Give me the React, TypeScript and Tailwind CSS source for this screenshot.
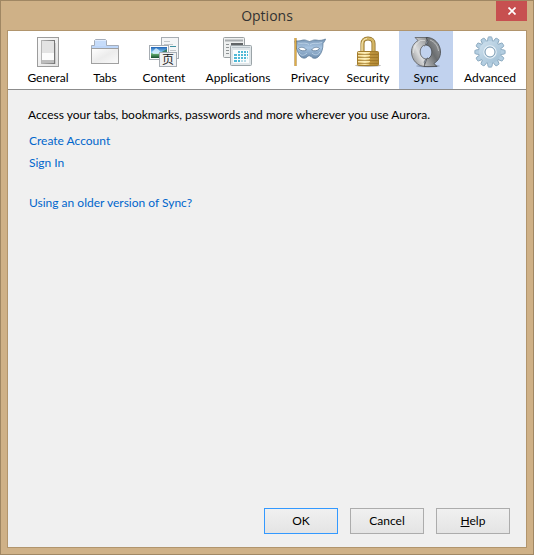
import React, { useState } from 'react';

const GeneralIcon = () => (
  <svg width="32" height="32" viewBox="0 0 32 32" fill="none">
    <defs>
      <linearGradient id="genPlate" x1="0" y1="0" x2="1" y2="1">
        <stop offset="0" stopColor="#fbfbfb" />
        <stop offset="1" stopColor="#e2e2e2" />
      </linearGradient>
      <linearGradient id="genShade" x1="0" y1="0" x2="1" y2="0">
        <stop offset="0" stopColor="#b5b5b5" />
        <stop offset="1" stopColor="#777" />
      </linearGradient>
    </defs>
    <rect x="5.5" y="1.5" width="21" height="29" fill="url(#genPlate)" stroke="#9c9c9c" />
    <path d="M11 7h13v21H11z" fill="#999" opacity=".35" />
    <rect x="9.5" y="4.5" width="13" height="23" fill="#e3e3e3" stroke="url(#genShade)" />
    <path d="M10 17h12v7H10z" fill="#fcfcfc" />
    <path d="M10 24h12v3H10z" fill="#bdbdbd" />
  </svg>
);

const TabsIcon = () => (
  <svg width="32" height="32" viewBox="0 0 32 32" fill="none">
    <defs>
      <linearGradient id="tabBody" x1="0" y1="0" x2="1" y2="1">
        <stop offset="0" stopColor="#fff" />
        <stop offset=".5" stopColor="#ececec" />
        <stop offset="1" stopColor="#fafafa" />
      </linearGradient>
      <linearGradient id="tabTop" x1="0" y1="0" x2="0" y2="1">
        <stop offset="0" stopColor="#e4efff" />
        <stop offset="1" stopColor="#b7d2f8" />
      </linearGradient>
    </defs>
    <path d="M2.500 12.500v-3h3v-5l1-1h10l1 1v5h12v3z" fill="url(#tabTop)" stroke="#a5adba" />
    <path d="M6 5h11v6H6z" fill="#c6dcfa" />
    <path d="M3 10h26v2H3z" fill="#bdd6f9" />
    <rect x="2.500" y="12.500" width="27" height="15" fill="url(#tabBody)" stroke="#a0a0a0" />
  </svg>
);

const ContentIcon = () => (
  <svg width="32" height="32" viewBox="0 0 32 32" fill="none">
    <defs>
      <linearGradient id="sky" x1="0" y1="0" x2="0" y2="1">
        <stop offset="0" stopColor="#1f63b6" />
        <stop offset=".5" stopColor="#8fd0f4" />
        <stop offset=".62" stopColor="#64b070" />
        <stop offset="1" stopColor="#164e30" />
      </linearGradient>
    </defs>
    <rect x="13.500" y="1.500" width="17" height="21" fill="#f4f5f6" stroke="#a7adb3" />
    <path d="M16 5.500h6M16 8.500h9M22 14.500h6" stroke="#c3c7ca" />
    <path d="M22 10.500h6" stroke="#3c8fa0" />
    <rect x="1.500" y="9.500" width="19" height="14" fill="#fff" stroke="#a7adb3" />
    <path d="M3 11h16v11H3z" fill="url(#sky)" />
    <path d="M4 16l4-4 3 2 2 3-3 1H5z" fill="#d9f1ff" opacity=".8" />
    <path d="M12 17l7-4v9h-8z" fill="#236a3c" opacity=".75" />
    <rect x="11.500" y="16.500" width="17" height="14" fill="#f1f2f3" stroke="#a7adb3" />
    <text x="20" y="28" textAnchor="middle" fontSize="12" fill="#222" className="font-['Noto_Sans_CJK_SC',sans-serif]">页</text>
  </svg>
);

const ApplicationsIcon = () => (
  <svg width="32" height="32" viewBox="0 0 32 32" fill="none">
    <rect x="1.500" y="1.500" width="21" height="20" rx="1" fill="#eef0f0" stroke="#9ba0a2" />
    <path d="M3 4.500h18" stroke="#a9adaf" strokeWidth="2" />
    <path d="M4 8.500h3M4 11.500h3M4 14.500h3M4 17.500h3" stroke="#8f9394" />
    <path d="M9 7h12v3H9z" fill="#616567" />
    <rect x="8.500" y="9.500" width="21" height="20" rx="1" fill="#dfe5e8" stroke="#9ba4a8" />
    <path d="M10 11.500h18" stroke="#bbc5ca" />
    <path d="M11 14h16v13H11z" fill="#fbfdfd" />
    <path
      d="M16 15h2v2h-2zM19 15h2v2h-2zM22 15h2v2h-2zM25 15h1v2h-1zM12 18h3v2h-3zM16 18h2v2h-2zM19 18h2v2h-2zM22 18h2v2h-2zM25 18h1v2h-1zM12 21h3v2h-3zM16 21h2v2h-2zM19 21h2v2h-2zM22 21h2v2h-2zM12 24h3v2h-3zM16 24h2v2h-2z"
      fill="#4fb9d6"
    />
    <path d="M19 24h2v2h-2zM22 24h2v2h-2zM25 21h1v2h-1z" fill="#b8dce7" />
  </svg>
);

const PrivacyIcon = () => (
  <svg width="32" height="32" viewBox="0 0 32 32" fill="none">
    <defs>
      <linearGradient id="maskFill" x1="0" y1="0" x2="0" y2="1">
        <stop offset="0" stopColor="#7896b5" />
        <stop offset=".45" stopColor="#a8c5e2" />
        <stop offset="1" stopColor="#6d8cac" />
      </linearGradient>
    </defs>
    <path
      d="M1 5c3 0 5 0 8-1 3-.5 4 1 6.500 1.500C18 5 19 3.500 22 4c4 1 7 0 9.500-1-.5 2-1.500 3-2.500 4.500 0 5-1 9-4 12.500-2.500 3-6 3-8 .5-1-1-2.500-1-3.500 0-2 2.500-5.500 2-7.500-.5C3.500 17 1.500 10 1 5z"
      fill="url(#maskFill)"
      stroke="#5f7d9b"
      strokeWidth=".8"
    />
    <path d="M4.500 12.500c2-2 6-1.500 8 1.500-3 1.500-6 1-8-1.500zM17.500 14c2-3 6-3.500 8-1.500-2 2.500-5 3-8 1.500z" fill="#fff" stroke="#5d7894" strokeWidth=".8" />
    <path d="M5 17c2 3 5 3 8 0M18 17c3 3 6 2 8-1M4 7c4 1 7-1 11 1.500M16 8.500c4-2.500 7 0 12-2" stroke="#d4e6f5" opacity=".6" />
    <path d="M1.500 2v28" stroke="#9c6b14" strokeWidth="2" />
    <path d="M1.500 2v28" stroke="#dfae45" />
  </svg>
);

const SecurityIcon = () => (
  <svg width="32" height="32" viewBox="0 0 32 32" fill="none">
    <defs>
      <linearGradient id="lockBody" x1="0" y1="0" x2="1" y2="0">
        <stop offset="0" stopColor="#d1ab54" />
        <stop offset=".35" stopColor="#fae9ae" />
        <stop offset=".56" stopColor="#dfbf6c" />
        <stop offset=".58" stopColor="#c0953c" />
        <stop offset="1" stopColor="#b08838" />
      </linearGradient>
    </defs>
    <ellipse cx="16" cy="29.500" rx="13" ry="1.500" fill="#555" opacity=".4" />
    <path d="M10.500 17V7.500c0-3 2-5 5.500-5s5.500 2 5.500 5V17" stroke="#8c6b25" strokeWidth="4" />
    <path d="M10.500 17V7.500c0-3 2-5 5.500-5s5.500 2 5.500 5V17" stroke="#d3b564" strokeWidth="2.500" />
    <path d="M10 16V8c0-3 2-5 5-5.500" stroke="#f8ebbd" />
    <rect x="5.500" y="15.500" width="21" height="14" rx="1" fill="url(#lockBody)" stroke="#a27c2c" />
    <path d="M6 18.500h20M6 21.500h20M6 24.500h20M6 27.500h20" stroke="#936b20" opacity=".6" />
    <path d="M6 16.500h12M6 19.500h12M6 22.500h12M6 25.500h12" stroke="#fff0bb" opacity=".8" />
  </svg>
);

const SyncIcon = () => (
  <svg width="32" height="32" viewBox="0 0 32 32" fill="none">
    <defs>
      <linearGradient id="syncA" x1="0" y1="1" x2="1" y2="0">
        <stop offset="0" stopColor="#7d7f81" />
        <stop offset=".45" stopColor="#dcddde" />
        <stop offset="1" stopColor="#8b8d8f" />
      </linearGradient>
      <linearGradient id="syncB" x1="0" y1="1" x2="1" y2="0">
        <stop offset="0" stopColor="#c2c4c5" />
        <stop offset=".5" stopColor="#6a6d6f" />
        <stop offset="1" stopColor="#a3a5a7" />
      </linearGradient>
    </defs>
    <ellipse cx="18" cy="30" rx="12" ry="1.500" fill="#4d5d78" opacity=".4" />
    <path
      d="M5 1.500h13l-3 8.500-1.500-.5C9 12 9 20 14 22.500l2 .5-2 3 2 4.500C8 31 1.500 24 1.500 16 1.500 11 4 7 8 4.500z"
      fill="url(#syncA)"
      stroke="#5a5d60"
      strokeWidth=".8"
    />
    <path
      d="M27 30.500H14l3-8.500 1.500.5C23 20 23 12 18 9.500L16 9l2-3-2-4.500C24 1 30.500 8 30.500 16c0 5-2.500 9-6.500 11.500z"
      fill="url(#syncB)"
      stroke="#45484a"
      strokeWidth=".8"
    />
    <path d="M3.500 17c0-5.500 2.500-9.500 7-12.500H15M20 4c5 2 8 6 8.500 11" stroke="#f2f3f4" opacity=".5" />
  </svg>
);

const AdvancedIcon = () => (
  <svg width="32" height="32" viewBox="0 0 32 32" fill="none">
    <defs>
      <linearGradient id="gearFill" x1="0" y1="0" x2="1" y2="1">
        <stop offset="0" stopColor="#cfe1ee" />
        <stop offset="1" stopColor="#9fbed4" />
      </linearGradient>
    </defs>
    {[0, 30, 60, 90, 120, 150, 180, 210, 240, 270, 300, 330].map((deg) => (
      <path
        key={deg}
        d="M13.200 7l.8-5.500q.1-.7 2-.7t2 .7l.8 5.500z"
        fill="#b4cee1"
        stroke="#7f9fb7"
        strokeWidth=".8"
        transform={`rotate(${deg} 16 16)`}
      />
    ))}
    <circle cx="16" cy="16" r="11" fill="url(#gearFill)" />
    <circle cx="16" cy="16" r="6" stroke="#e3eef6" strokeWidth="1.500" />
    <circle cx="16" cy="16" r="5" fill="#fff" stroke="#7899b2" />
  </svg>
);

const TABS = [
  { name: 'General', width: 'w-[54px]', Icon: GeneralIcon },
  { name: 'Tabs', width: 'w-[54px]', Icon: TabsIcon },
  { name: 'Content', width: 'w-[58px]', Icon: ContentIcon },
  { name: 'Applications', width: 'w-[84px]', Icon: ApplicationsIcon },
  { name: 'Privacy', width: 'w-[54px]', Icon: PrivacyIcon },
  { name: 'Security', width: 'w-[56px]', Icon: SecurityIcon },
  { name: 'Sync', width: 'w-[54px]', Icon: SyncIcon },
  { name: 'Advanced', width: 'w-[68px]', Icon: AdvancedIcon },
];

const DIALOG_BUTTON = 'w-[74px] h-[26px] border bg-linear-to-b from-[#f0f0f0] to-[#e4e4e4]';

const App: React.FC = () => {
  const [active, setActive] = useState('Sync');

  return (
    <div className="min-h-screen flex flex-col bg-[#cfb187] border border-[#a08763] px-[6px] pb-[6px] font-['Lato',sans-serif] [font-variant-ligatures:none] text-[12px] leading-4 text-black">
      <header className="relative h-[29px] flex items-center justify-center">
        <h1 className="font-['Open_Sans',sans-serif] text-[14px] leading-5 text-[#333]">Options</h1>
        <button aria-label="Close" className="absolute right-0 top-0 w-[31px] h-5 bg-[#c75050] flex items-center justify-center">
          <svg width="8" height="8" viewBox="0 0 8 8" fill="none">
            <path d="M.5.500l7 7M7.500.500l-7 7" stroke="#fff" strokeWidth="1.700" />
          </svg>
        </button>
      </header>

      <div className="flex-1 flex flex-col border border-[#b1956d] bg-[#f0f0f0]">
        <nav className="flex gap-[3px] pl-[13px] bg-white border-b border-[#8c8c8c]">
          {TABS.map(({ name, width, Icon }) => (
            <button
              key={name}
              onClick={() => setActive(name)}
              className={`${width} h-[58px] shrink-0 flex flex-col items-center pt-[5px] gap-[2px] whitespace-nowrap ${active === name ? 'bg-[#c1d2ee]' : ''}`}
            >
              <Icon />
              <span>{name}</span>
            </button>
          ))}
        </nav>

        <main className="flex-1 flex flex-col items-start px-5 pt-[17px]">
          <p>Access your tabs, bookmarks, passwords and more wherever you use Aurora.</p>
          <div className="flex flex-col items-start pt-[10px] pl-px gap-[6px] text-[#0066cc]">
            <a href="#create">Create Account</a>
            <a href="#signin">Sign In</a>
            <a href="#old" className="mt-[18px]">Using an older version of Sync?</a>
          </div>
        </main>

        <footer className="flex justify-end gap-3 pr-4 pb-[13px]">
          <button className={`${DIALOG_BUTTON} border-[#3399ff]`}>OK</button>
          <button className={`${DIALOG_BUTTON} border-[#acacac]`}>Cancel</button>
          <button className={`${DIALOG_BUTTON} border-[#acacac]`}>
            <u>H</u>elp
          </button>
        </footer>
      </div>
    </div>
  );
};

export default App;
